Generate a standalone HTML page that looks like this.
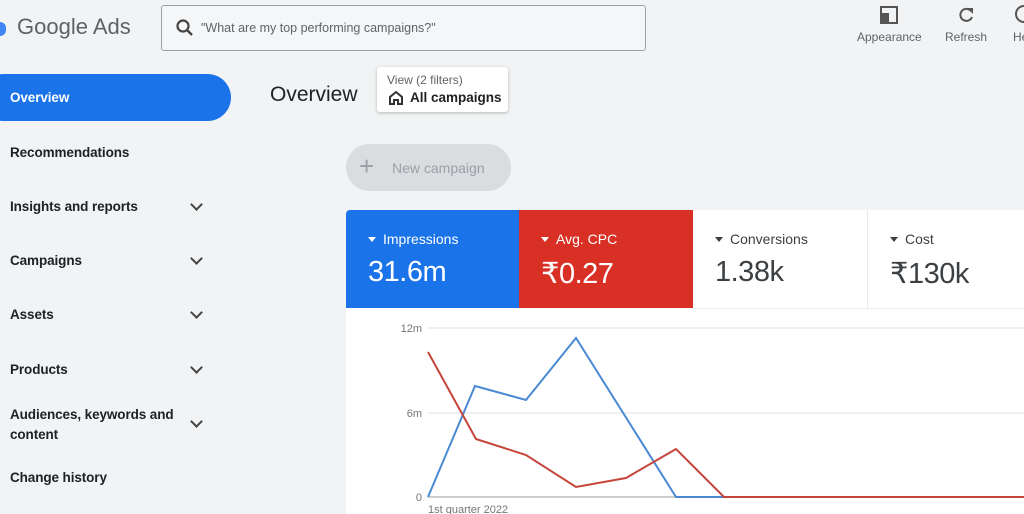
<!DOCTYPE html>
<html><head><style>
body{margin:0;width:1024px;height:514px;overflow:hidden;background:#f1f3f4;font-family:"Liberation Sans",sans-serif;position:relative;color:#202124}
.a{position:absolute}
.nav{position:absolute;left:10px;font-size:13.5px;color:#202124;font-weight:bold;letter-spacing:-0.1px}
.chev{position:absolute;left:192px;width:7px;height:7px;border-right:2px solid #444;border-bottom:2px solid #444;transform:rotate(45deg)}
.tile{position:absolute;top:210px;height:98px}
.tl{position:absolute;left:22px;top:21px;font-size:14px}
.tv{position:absolute;left:22px;top:46px;font-size:29px;letter-spacing:-0.5px}
.tri{display:inline-block;width:0;height:0;border-left:4px solid transparent;border-right:4px solid transparent;border-top:5px solid currentColor;margin-right:7px;vertical-align:2px}
</style></head><body>
<div class="a" style="left:-6px;top:22px;width:12px;height:14px;background:#4285f4;border-radius:6px"></div>
<div class="a" style="left:17px;top:14px;font-size:22px;color:#5f6368">Google Ads</div>
<div class="a" style="left:161px;top:5px;width:483px;height:44px;border:1px solid #9aa0a6;border-radius:3px;background:#f5f6f7"></div>
<svg class="a" style="left:175px;top:18px" width="20" height="20"><circle cx="8" cy="8" r="5.5" stroke="#444" stroke-width="2.2" fill="none"/><path d="M12 12l5 5" stroke="#444" stroke-width="2.4"/></svg>
<div class="a" style="left:201px;top:21px;font-size:12.5px;color:#5f6368">"What are my top performing campaigns?"</div>
<svg class="a" style="left:879px;top:5px" width="20" height="20"><rect x="2" y="2" width="16" height="16" fill="none" stroke="#555" stroke-width="2"/><rect x="2" y="8" width="8" height="10" fill="#555"/></svg>
<div class="a" style="left:857px;top:30px;font-size:12px;color:#5f6368">Appearance</div>
<svg class="a" style="left:957px;top:6px" width="18" height="18"><path d="M14 5A6 6 0 1 0 15 11" stroke="#555" stroke-width="2" fill="none"/><path d="M10 2h6v6z" fill="#555"/></svg>
<div class="a" style="left:945px;top:30px;font-size:12px;color:#5f6368">Refresh</div>
<div class="a" style="left:1013px;top:30px;font-size:12px;color:#5f6368">He</div>
<div class="a" style="left:1015px;top:5px;width:14px;height:14px;border:2px solid #555;border-radius:50%"></div>
<div class="a" style="left:-20px;top:74px;width:251px;height:47px;background:#1a73e8;border-radius:24px"></div>
<div class="nav" style="top:90px;color:#fff">Overview</div>
<div class="nav" style="top:145px">Recommendations</div>
<div class="nav" style="top:199px">Insights and reports</div><div class="chev" style="top:200px"></div>
<div class="nav" style="top:253px">Campaigns</div><div class="chev" style="top:254px"></div>
<div class="nav" style="top:307px">Assets</div><div class="chev" style="top:308px"></div>
<div class="nav" style="top:362px">Products</div><div class="chev" style="top:363px"></div>
<div class="nav" style="top:405px;line-height:20px">Audiences, keywords and<br>content</div><div class="chev" style="top:417px"></div>
<div class="nav" style="top:470px">Change history</div>
<div class="a" style="left:270px;top:83px;font-size:21px">Overview</div>
<div class="a" style="left:377px;top:67px;width:131px;height:45px;background:#fff;border-radius:3px;box-shadow:0 1px 3px rgba(0,0,0,.25)"></div>
<div class="a" style="left:387px;top:73px;font-size:12px;color:#5f6368">View (2 filters)</div>
<svg class="a" style="left:389px;top:91px" width="14" height="14"><path d="M1 13V6l6-5 6 5v7h-4V9H5v4z" fill="none" stroke="#333" stroke-width="2"/></svg>
<div class="a" style="left:410px;top:90px;font-size:13.5px;font-weight:bold;color:#202124">All campaigns</div>
<div class="a" style="left:346px;top:144px;width:165px;height:47px;background:#dadce0;border-radius:24px"></div>
<div class="a" style="left:359px;top:152px;font-size:26px;color:#9aa0a6;line-height:28px">+</div>
<div class="a" style="left:392px;top:160px;font-size:14px;color:#9aa0a6">New campaign</div>
<div class="a" style="left:346px;top:210px;width:678px;height:304px;background:#fff;border-radius:4px 0 0 0"></div>
<div class="tile" style="left:346px;width:173px;background:#1a73e8;color:#fff;border-radius:4px 0 0 0"><div class="tl"><span class="tri"></span>Impressions</div><div class="tv">31.6m</div></div>
<div class="tile" style="left:519px;width:174px;background:#d93025;color:#fff"><div class="tl"><span class="tri"></span>Avg. CPC</div><div class="tv">₹0.27</div></div>
<div class="tile" style="left:693px;width:174px;border-right:1px solid #e8eaed;border-bottom:1px solid #e8eaed"><div class="tl" style="color:#3c4043"><span class="tri"></span>Conversions</div><div class="tv" style="color:#3c4043">1.38k</div></div>
<div class="tile" style="left:868px;width:156px;border-bottom:1px solid #e8eaed"><div class="tl" style="color:#3c4043"><span class="tri"></span>Cost</div><div class="tv" style="color:#3c4043">₹130k</div></div>
<svg class="a" style="left:0;top:0" width="1024" height="514">
<line x1="428" y1="328" x2="1024" y2="328" stroke="#e0e0e0"/>
<line x1="428" y1="413" x2="1024" y2="413" stroke="#e0e0e0"/>
<line x1="428" y1="497" x2="1024" y2="497" stroke="#9e9e9e"/>
<text x="422" y="332" font-size="11" fill="#757575" text-anchor="end" font-family="Liberation Sans">12m</text>
<text x="422" y="417" font-size="11" fill="#757575" text-anchor="end" font-family="Liberation Sans">6m</text>
<text x="422" y="501" font-size="11" fill="#757575" text-anchor="end" font-family="Liberation Sans">0</text>
<text x="428" y="513" font-size="11" fill="#757575" font-family="Liberation Sans">1st quarter 2022</text>
<polyline points="428,497 475,386 526,400 576,338 676,497 724,497" fill="none" stroke="#4a8ad4" stroke-width="2"/>
<polyline points="428,352 476,439 526,455 576,487 626,478 676,449 724,497 1024,497" fill="none" stroke="#c5453a" stroke-width="2"/>
</svg>
</body></html>
